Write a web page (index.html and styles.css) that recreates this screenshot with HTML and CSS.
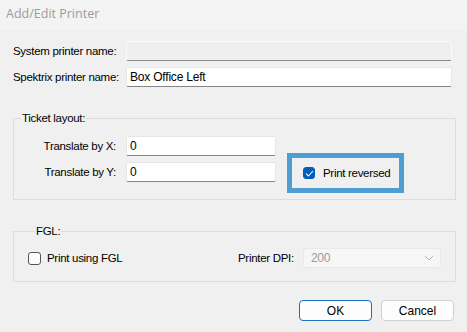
FILE: index.html
```html
<!DOCTYPE html>
<html lang="en">
<head>
    <meta charset="UTF-8">
    <title>Add/Edit Printer</title>
    <link rel="stylesheet" href="styles.css">
</head>
<body>
    <div class="dialog">
        <div class="titlebar">Add/Edit Printer</div>

        <div class="form">
            <div class="row">
                <label class="label">System printer name:</label>
                <div class="textbox wide disabled"></div>
            </div>
            <div class="row">
                <label class="label">Spektrix printer name:</label>
                <div class="textbox wide">Box Office Left</div>
            </div>

            <!-- Ticket layout -->
            <fieldset class="group ticket">
                <legend>Ticket layout:</legend>
                <div class="ticket-body">
                    <div class="ticket-fields">
                        <div class="row">
                            <label class="label">Translate by X:</label>
                            <div class="textbox narrow">0</div>
                        </div>
                        <div class="row">
                            <label class="label">Translate by Y:</label>
                            <div class="textbox narrow">0</div>
                        </div>
                    </div>
                    <div class="highlight">
                        <span class="check checked">
                            <svg width="9" height="7" viewBox="0 0 9 7"><path d="M1 3.6 L3.4 6 L8 1" fill="none" stroke="#fff" stroke-width="1.1"/></svg>
                        </span>
                        <span>Print reversed</span>
                    </div>
                </div>
            </fieldset>

            <!-- FGL -->
            <fieldset class="group fgl">
                <legend>FGL:</legend>
                <div class="fgl-body">
                    <div class="check-row">
                        <span class="check"></span>
                        <span>Print using FGL</span>
                    </div>
                    <div class="dpi">
                        <span>Printer DPI:</span>
                        <div class="select">
                            <span>200</span>
                            <svg width="10" height="6" viewBox="0 0 10 6"><path d="M1 1 L5 5 L9 1" fill="none" stroke="#b5b5b5" stroke-width="1"/></svg>
                        </div>
                    </div>
                </div>
            </fieldset>

            <div class="buttons">
                <button class="btn default">OK</button>
                <button class="btn">Cancel</button>
            </div>
        </div>
    </div>
</body>
</html>
```
FILE: styles.css
```css
* {
    margin: 0;
    padding: 0;
    box-sizing: border-box;
}

body {
    background: #f0f0f0;
    font-family: "Liberation Sans", Arial, sans-serif;
    font-size: 11.5px;
    letter-spacing: -0.3px;
    color: #000000;
    width: 467px;
    height: 332px;
    overflow: hidden;
}

/* Title bar */
.titlebar {
    height: 30px;
    padding: 2px 0 0 6px;
    line-height: 24px;
    font-family: "Open Sans", sans-serif;
    font-size: 12.5px;
    letter-spacing: 0;
    color: #9b9b9b;
    background: #f3f3f3;
}

.form {
    padding: 11px 0 0 0;
}

.row {
    display: flex;
    align-items: center;
    height: 20px;
    margin-bottom: 6px;
}

.form > .row {
    padding-left: 13px;
}

.label {
    width: 103px;
    text-align: right;
    margin-right: 10px;
    white-space: nowrap;
}

.textbox {
    height: 20px;
    line-height: 18px;
    padding-left: 3px;
    font-size: 12px;
    letter-spacing: -0.2px;
    background: #ffffff;
    border: 1px solid #e6e6e6;
    border-bottom-color: #868686;
    border-radius: 2px;
}

.textbox.wide {
    width: 326px;
}

.textbox.narrow {
    width: 150px;
}

.textbox.disabled {
    background: #efefef;
    border-color: #fafafa;
    border-bottom-color: #8a8a8a;
}

/* Group boxes */
.group {
    border: 1px solid #dcdcdc;
    margin: 0 11px 0 13px;
}

.group legend {
    margin-left: 7px;
    padding: 0 1px;
    line-height: 16px;
}

.ticket {
    margin-top: 23px;
    padding: 10px 0 6px 0;
}

.ticket-body {
    display: flex;
    align-items: flex-end;
}

.ticket-fields .row:last-child {
    margin-bottom: 11px;
}

.ticket .label {
    width: 102px;
}

.highlight {
    display: flex;
    align-items: center;
    width: 117px;
    height: 40px;
    margin-left: 11px;
    padding-left: 11px;
    border: 5px solid #4d9fd3;
}

.check {
    display: inline-flex;
    align-items: center;
    justify-content: center;
    width: 12px;
    height: 12px;
    margin-right: 8px;
    border: 1px solid #555555;
    border-radius: 3px;
    background: #fdfdfd;
}

.check.checked {
    background: #005fb8;
    border-color: #005fb8;
}

.fgl {
    margin-top: 23px;
    padding: 9px 0 13px 14px;
}

.fgl-body {
    display: flex;
    align-items: center;
    height: 20px;
}

.check-row {
    display: flex;
    align-items: center;
    width: 210px;
}

.check-row .check {
    width: 13px;
    height: 13px;
    margin-right: 6px;
}

.dpi {
    display: flex;
    align-items: center;
}

.dpi > span {
    width: 65px;
}

.select {
    display: flex;
    align-items: center;
    justify-content: space-between;
    width: 138px;
    height: 20px;
    padding: 0 6px 0 7px;
    font-size: 12px;
    background: #f6f6f6;
    border: 1px solid #e9e9e9;
    border-radius: 3px;
    color: #9a9a9a;
}

/* Dialog buttons */
.buttons {
    display: flex;
    justify-content: flex-end;
    gap: 9px;
    margin: 18px 13px 0 0;
}

.btn {
    width: 73px;
    height: 21px;
    font-family: inherit;
    font-size: 12px;
    letter-spacing: 0;
    background: #fdfdfd;
    border: 1px solid #d0d0d0;
    border-radius: 4px;
    color: #000000;
}

.btn.default {
    border-color: #1a6fc0;
}
```
